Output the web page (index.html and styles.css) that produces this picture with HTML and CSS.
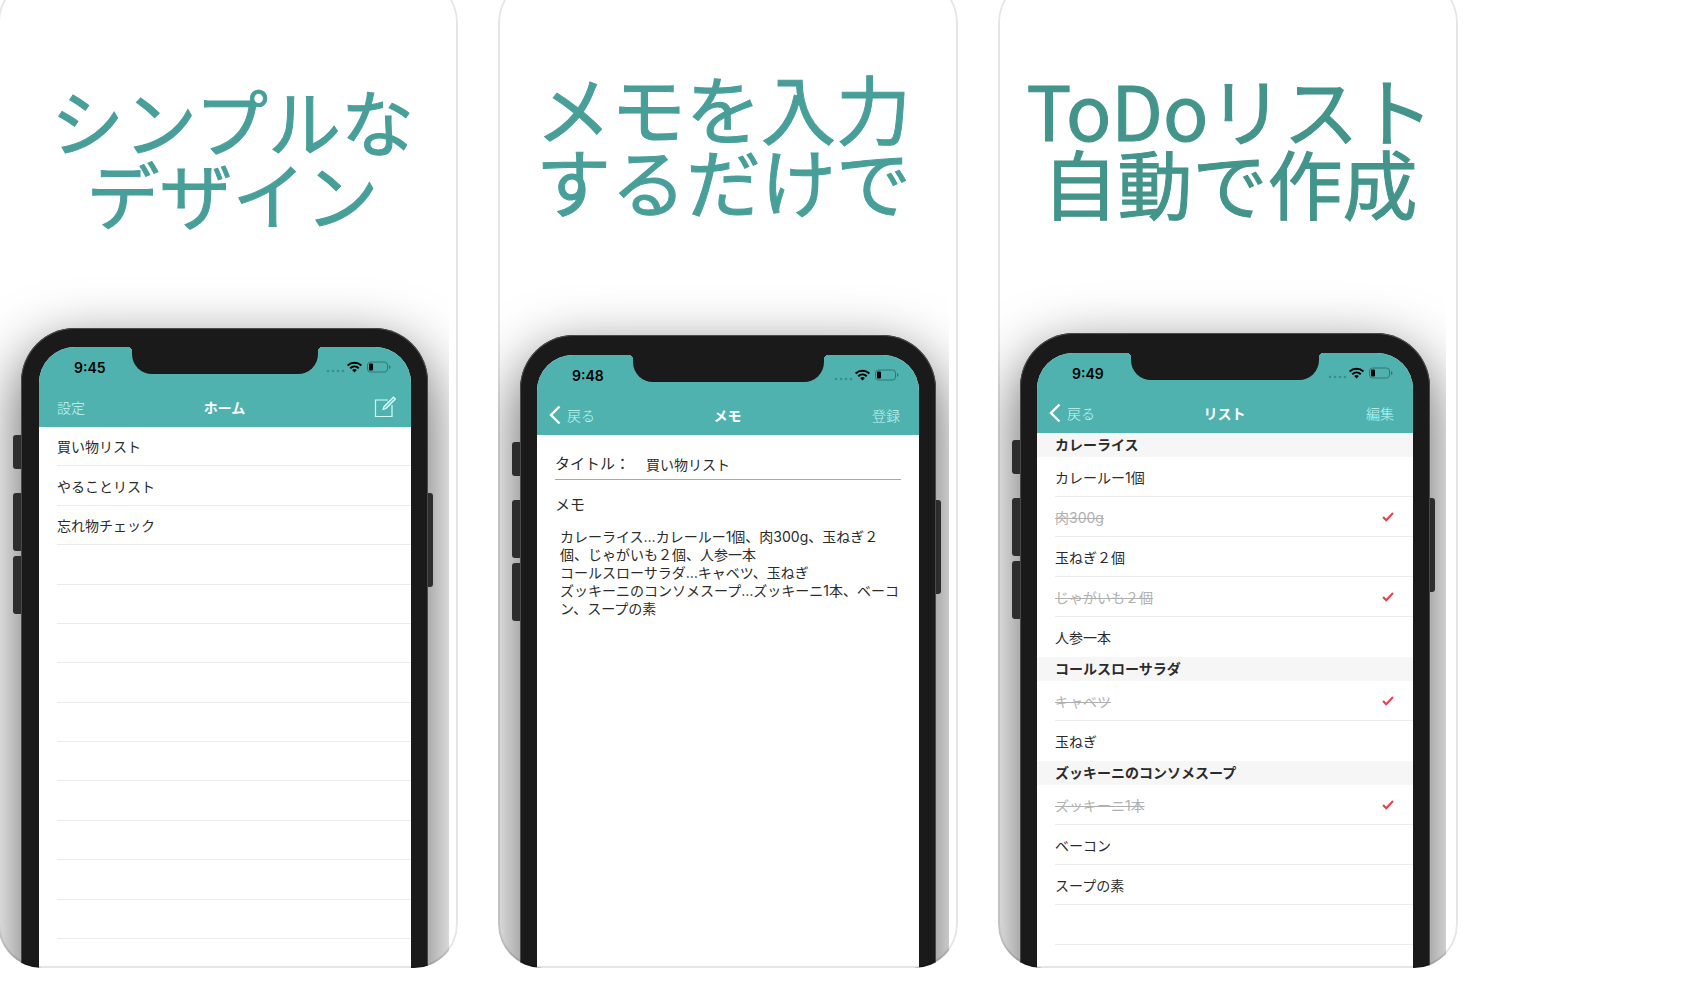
FILE: index.html
```html
<!DOCTYPE html>
<html lang="ja">
<head>
  <meta charset="UTF-8" />
  <meta name="viewport" content="width=device-width, initial-scale=1.0"/>
  <title>メモからToDoリスト</title>
  <link rel="stylesheet" href="styles.css">
</head>
<body>
  <!-- shared icons -->
  <svg class="icons" width="0" height="0" aria-hidden="true">
    <symbol id="status" viewBox="0 0 65 14">
      <g fill="#3c8d89">
        <circle cx="2" cy="11" r="1.3"/><circle cx="7" cy="11" r="1.3"/><circle cx="12" cy="11" r="1.3"/><circle cx="17" cy="11" r="1.3"/>
      </g>
      <g fill="none" stroke="#000" stroke-width="2">
        <path d="M21.6 5.4a10.2 10.2 0 0 1 13.8 0"/>
        <path d="M24.2 8.2a6.4 6.4 0 0 1 8.6 0"/>
      </g>
      <path d="M28.5 12.6l-2.4-2.5a3.6 3.6 0 0 1 4.8 0z"/>
      <rect x="41.5" y="2" width="20" height="10" rx="3" fill="none" stroke="#2f7773"/>
      <rect x="43" y="3.5" width="4" height="7" rx="1"/>
      <path d="M63 5v4q1.5-.5 1.5-2T63 5z" fill="#2f7773"/>
    </symbol>
    <symbol id="back" viewBox="0 0 12 20">
      <path d="M10.5 1.5L2 10l8.5 8.5" fill="none" stroke="#fff" stroke-width="2.4"/>
    </symbol>
    <symbol id="compose" viewBox="0 0 22 22">
      <path d="M14 4H1.500v16.500h16.500V9" fill="none" stroke="#d4fffb" stroke-width="1.2"/>
      <path d="M9 13.500l1-3L19.500 1l2 2-9.500 9.500z" fill="#6cd0cb" stroke="#e8fffd" stroke-width="1.1"/>
    </symbol>
    <symbol id="tick" viewBox="0 0 12 10">
      <path d="M1 5l3.200 3.200L11 1" fill="none" stroke="#ee3b4e" stroke-width="2"/>
    </symbol>
  </svg>

  <main class="gallery">
    <section class="card home">
      <div class="shot">
        <h2>シンプルな<br>デザイン</h2>
        <div class="phone">
          <i class="side mute"></i><i class="side vol-up"></i><i class="side vol-down"></i><i class="side power"></i>
          <div class="screen">
            <div class="notch"></div>
            <header>
              <div class="status"><span>9:45</span><svg width="65" height="14"><use href="#status"/></svg></div>
              <nav>
                <button type="button">設定</button>
                <h3>ホーム</h3>
                <button type="button" class="icon-btn" aria-label="新規作成"><svg width="22" height="22"><use href="#compose"/></svg></button>
              </nav>
            </header>
            <ul class="rows home-rows">
              <li><a href="#">買い物リスト</a></li>
              <li><a href="#">やることリスト</a></li>
              <li><a href="#">忘れ物チェック</a></li>
              <li></li><li></li><li></li><li></li><li></li><li></li><li></li><li></li><li></li><li></li>
            </ul>
          </div>
        </div>
      </div>
    </section>

    <section class="card memo">
      <div class="shot">
        <h2>メモを入力<br>するだけで</h2>
        <div class="phone">
          <i class="side mute"></i><i class="side vol-up"></i><i class="side vol-down"></i><i class="side power"></i>
          <div class="screen">
            <div class="notch"></div>
            <header>
              <div class="status"><span>9:48</span><svg width="65" height="14"><use href="#status"/></svg></div>
              <nav>
                <button type="button" class="back"><svg width="12" height="20"><use href="#back"/></svg>戻る</button>
                <h3>メモ</h3>
                <button type="button">登録</button>
              </nav>
            </header>
            <form>
              <div class="title-row">
                <label for="title">タイトル：</label>
                <input type="text" id="title" value="買い物リスト" />
              </div>
              <label for="memo" class="memo-label">メモ</label>
              <textarea id="memo" spellcheck="false">カレーライス…カレールー1個、肉300g、玉ねぎ２
個、じゃがいも２個、人参一本
コールスローサラダ…キャベツ、玉ねぎ
ズッキーニのコンソメスープ…ズッキーニ1本、ベーコ
ン、スープの素</textarea>
            </form>
          </div>
        </div>
      </div>
    </section>

    <section class="card todo">
      <div class="shot">
        <h2>ToDoリスト<br>自動で作成</h2>
        <div class="phone">
          <i class="side mute"></i><i class="side vol-up"></i><i class="side vol-down"></i><i class="side power"></i>
          <div class="screen">
            <div class="notch"></div>
            <header>
              <div class="status"><span>9:49</span><svg width="65" height="14"><use href="#status"/></svg></div>
              <nav>
                <button type="button" class="back"><svg width="12" height="20"><use href="#back"/></svg>戻る</button>
                <h3>リスト</h3>
                <button type="button">編集</button>
              </nav>
            </header>
            <h4>カレーライス</h4>
            <ul class="rows">
              <li><label><input type="checkbox"><span>カレールー1個</span><svg class="tick" width="12" height="10"><use href="#tick"/></svg></label></li>
              <li><label><input type="checkbox" checked><span>肉300g</span><svg class="tick" width="12" height="10"><use href="#tick"/></svg></label></li>
              <li><label><input type="checkbox"><span>玉ねぎ２個</span><svg class="tick" width="12" height="10"><use href="#tick"/></svg></label></li>
              <li><label><input type="checkbox" checked><span>じゃがいも２個</span><svg class="tick" width="12" height="10"><use href="#tick"/></svg></label></li>
              <li><label><input type="checkbox"><span>人参一本</span><svg class="tick" width="12" height="10"><use href="#tick"/></svg></label></li>
            </ul>
            <h4>コールスローサラダ</h4>
            <ul class="rows">
              <li><label><input type="checkbox" checked><span>キャベツ</span><svg class="tick" width="12" height="10"><use href="#tick"/></svg></label></li>
              <li><label><input type="checkbox"><span>玉ねぎ</span><svg class="tick" width="12" height="10"><use href="#tick"/></svg></label></li>
            </ul>
            <h4>ズッキーニのコンソメスープ</h4>
            <ul class="rows">
              <li><label><input type="checkbox" checked><span>ズッキーニ1本</span><svg class="tick" width="12" height="10"><use href="#tick"/></svg></label></li>
              <li><label><input type="checkbox"><span>ベーコン</span><svg class="tick" width="12" height="10"><use href="#tick"/></svg></label></li>
              <li><label><input type="checkbox"><span>スープの素</span><svg class="tick" width="12" height="10"><use href="#tick"/></svg></label></li>
              <li></li>
              <li></li>
            </ul>
          </div>
        </div>
      </div>
    </section>
  </main>
</body>
</html>
```
FILE: styles.css
```css
* {
  box-sizing: border-box;
}
body {
  margin: 0;
  background: #fff;
  color: #2b2b2b;
  font-family: Inter, "Noto Sans CJK JP", sans-serif;
  font-size: 14px;
  overflow: hidden;
}
h2, h3, h4, ul {
  margin: 0;
  padding: 0;
}
.icons {
  position: absolute;
}

.gallery {
  display: flex;
  gap: 40px;
  margin: -22px 0 0 -2px;
}
.card {
  flex: 0 1 460px;
  height: 990px;
  position: relative;
  border-radius: 44px;
  overflow: hidden;
}
.card::after {
  content: "";
  position: absolute;
  inset: 0;
  border: 2px solid rgba(0,0,0,0.1);
  border-radius: 44px;
  pointer-events: none;
}
.shot {
  display: flex;
  flex-direction: column;
  height: 100%;
  margin-right: 9px;
  overflow: hidden;
}
h2 {
  color: #489f99;
  font-family: "Noto Sans CJK JP", sans-serif;
  font-size: 75px;
  font-weight: 400;
  line-height: 73px;
  text-align: center;
  white-space: nowrap;
  -webkit-text-stroke: 1px;
}
.home h2 {
  margin: 105px -18px 99px 0;
  font-size: 73px;
}
.memo h2 {
  margin: 92px 0 119px;
}
.todo h2 {
  margin: 94px -16px 115px 0;
  color: #43948a;
}
.todo .shot {
  margin-right: 12px;
}

/* phone */
.phone {
  flex: 1;
  position: relative;
  margin: 0 13px -90px 22px;
  padding: 20px 17px 0;
  background: #1a1a1a;
  border-radius: 54px 54px 0 0;
  box-shadow: inset 0 0 0 1px #4a4a4a, 0 20px 60px rgba(0,0,0,0.65);
}
.home .phone {
  margin-left: 23px;
  margin-right: 21px;
  padding-top: 19px;
  padding-left: 18px;
}
.todo .phone {
  margin-right: 16px;
}
.side {
  position: absolute;
  left: -8px;
  width: 8px;
  height: 58px;
  background: #2d2d2d;
  border-radius: 3px 0 0 3px;
}
.mute {
  top: 107px;
  height: 34px;
}
.vol-up {
  top: 165px;
}
.vol-down {
  top: 228px;
}
.power {
  top: 165px;
  left: auto;
  right: -5px;
  width: 5px;
  height: 94px;
  border-radius: 0 3px 3px 0;
}
.screen {
  position: relative;
  height: 100%;
  background: #fff;
  border-radius: 36px 36px 0 0;
  overflow: hidden;
}
.notch {
  position: absolute;
  top: 0;
  left: 25%;
  width: 50%;
  height: 27px;
  background: #1a1a1a;
  border-radius: 0 0 20px 20px;
}
.notch::before, .notch::after {
  content: "";
  position: absolute;
  top: 0;
  left: -4px;
  width: 4px;
  height: 4px;
  background: radial-gradient(circle at 0 100%, transparent 4px, #1a1a1a 4px);
}
.notch::after {
  left: auto;
  right: -4px;
  background: radial-gradient(circle at 100% 100%, transparent 4px, #1a1a1a 4px);
}
header {
  background: #50b2ae;
}
.status {
  display: flex;
  justify-content: space-between;
  align-items: center;
  height: 40px;
  padding: 0 20px 0 35px;
  color: #000;
  font-weight: 600;
}
nav {
  display: grid;
  grid-template-columns: 1fr auto 1fr;
  align-items: center;
  height: 40px;
  padding: 0 19px 0 18px;
}
nav h3 {
  color: #fff;
  font-size: 14px;
  font-weight: 600;
}
button {
  justify-self: start;
  display: flex;
  align-items: center;
  gap: 6px;
  padding: 0;
  border: none;
  background: none;
  color: #c4f8f3;
  font: inherit;
  font-weight: 300;
  cursor: pointer;
}
nav button:last-child {
  justify-self: end;
}
.back {
  margin-left: -6px;
}
.icon-btn {
  margin-right: -4px;
}

/* lists */
.rows {
  list-style: none;
  padding-left: 18px;
}
.rows li {
  height: 40px;
  border-bottom: 1px solid #ebebeb;
}
.rows li:last-child {
  border-bottom-color: transparent;
}
.home-rows {
  display: grid;
  grid-auto-rows: 1fr;
  min-height: 512px;
}
.home-rows li, .home-rows li:last-child {
  height: auto;
  border-bottom-color: #ebebeb;
}
.rows a, .rows label {
  display: flex;
  justify-content: space-between;
  align-items: center;
  height: 100%;
  padding-right: 19px;
  color: inherit;
  text-decoration: none;
}
.rows input {
  position: absolute;
  opacity: 0;
}
.tick {
  visibility: hidden;
}
.rows input:checked ~ .tick {
  visibility: visible;
}
.rows input:checked ~ span {
  color: #b0b0b0;
  text-decoration: line-through;
}
h4 {
  padding-left: 18px;
  background: #f6f6f6;
  font-size: 14px;
  font-weight: 600;
  line-height: 24px;
}

/* memo form */
form {
  padding: 14px 18px 0;
}
.title-row {
  display: flex;
  align-items: center;
  gap: 16px;
  height: 31px;
  border-bottom: 1px solid #a8a8a8;
}
form label {
  font-size: 15px;
  line-height: 22px;
}
.memo-label {
  display: block;
  margin: 14px 0 12px;
}
input[type="text"], textarea {
  padding: 0;
  border: none;
  outline: none;
  background: none;
  color: inherit;
  font: inherit;
}
input[type="text"] {
  flex: 1;
  min-width: 0;
}
textarea {
  display: block;
  width: 100%;
  height: 240px;
  padding-left: 5px;
  line-height: 18px;
  white-space: pre;
  resize: none;
  overflow: hidden;
}
```
